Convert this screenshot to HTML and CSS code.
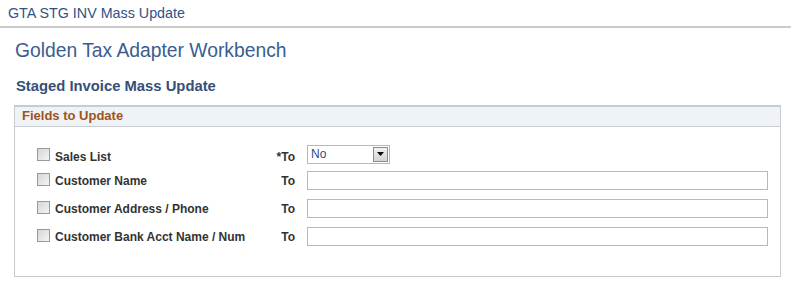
FILE: index.html
```html
<!DOCTYPE html>
<html lang="en">
<head>
    <meta charset="UTF-8">
    <title>GTA STG INV Mass Update</title>
    <link rel="stylesheet" href="styles.css">
</head>
<body>

    <div class="top-bar">GTA STG INV Mass Update</div>

    <div class="page">
        <h1>Golden Tax Adapter Workbench</h1>
        <h2>Staged Invoice Mass Update</h2>

        <div class="group-box">
            <div class="group-header">Fields to Update</div>
            <div class="group-body">
                <div class="field-row first">
                    <label class="check"><span class="box"></span>Sales List</label>
                    <span class="to">*To</span>
                    <div class="select">
                        <span class="value">No</span>
                        <span class="arrow"><svg width="9" height="5" viewBox="0 0 9 5"><path d="M1 0h7L4.5 4z" fill="#000"/></svg></span>
                    </div>
                </div>
                <div class="field-row">
                    <label class="check"><span class="box"></span>Customer Name</label>
                    <span class="to">To</span>
                    <input type="text" class="text-input">
                </div>
                <div class="field-row">
                    <label class="check"><span class="box"></span>Customer Address / Phone</label>
                    <span class="to">To</span>
                    <input type="text" class="text-input">
                </div>
                <div class="field-row">
                    <label class="check"><span class="box"></span>Customer Bank Acct Name / Num</label>
                    <span class="to">To</span>
                    <input type="text" class="text-input">
                </div>
            </div>
        </div>
    </div>

</body>
</html>
```

FILE: styles.css
```css
body {
    font-family: 'Liberation Sans', Arial, sans-serif;
    background-color: #ffffff;
    margin: 0;
    color: #333333;
}

.top-bar {
    height: 26px;
    line-height: 26px;
    padding-left: 8px;
    font-size: 14.3px;
    color: #2f5289;
    border-bottom: 2px solid #cbcbcb;
}

.page {
    padding: 0 10px 0 14px;
}

h1 {
    font-size: 19.3px;
    font-weight: normal;
    color: #3a5d91;
    margin: 9px 0 0 1px;
    line-height: 28px;
}

h2 {
    font-size: 14.8px;
    font-weight: bold;
    color: #344f7a;
    margin: 12px 0 0 2px;
    line-height: 18px;
}

.group-box {
    margin-top: 10px;
    border: 1px solid #c6ccd2;
    border-top-width: 2px;
    width: 767px;
    height: 172px;
    box-sizing: border-box;
}

.group-header {
    height: 19px;
    line-height: 18px;
    background-color: #eff3f5;
    border-bottom: 1px solid #c6ccd2;
    padding-left: 7px;
    font-size: 13px;
    font-weight: bold;
    color: #a0521c;
}

.group-body {
    padding: 16px 0 0 22px;
}

.field-row {
    display: flex;
    align-items: center;
    height: 28px;
}

.field-row.first {
    height: 22px;
    margin-bottom: 1px;
}

.check {
    display: flex;
    align-items: center;
    width: 230px;
    padding-top: 2px;
    font-size: 12px;
    font-weight: bold;
    color: #333333;
}

.first .check,
.first .to {
    padding-top: 5px;
}

.box {
    width: 11px;
    height: 11px;
    border: 1px solid #9a9a9a;
    background: linear-gradient(135deg, #d6d6d6, #f4f4f4);
    margin-right: 5px;
    margin-top: -4px;
}

.to {
    width: 28px;
    text-align: right;
    padding-top: 2px;
    font-size: 12px;
    font-weight: bold;
    color: #333333;
    margin-right: 12px;
}

.select {
    display: flex;
    align-items: center;
    justify-content: space-between;
    width: 83px;
    height: 19px;
    box-sizing: border-box;
    border: 1px solid #b8b8b8;
    font-size: 12px;
    color: #2f4f80;
    padding-left: 3px;
}

.arrow {
    display: flex;
    align-items: center;
    justify-content: center;
    width: 15px;
    height: 15px;
    margin-right: 1px;
    border: 1px solid #8e8e8e;
    box-sizing: border-box;
    background: linear-gradient(#f3f3f3, #d2d2d2);
}

.text-input {
    width: 461px;
    height: 19px;
    box-sizing: border-box;
    border: 1px solid #b8b8b8;
    margin: 0;
    padding: 0 3px;
    font-size: 12px;
}
```
